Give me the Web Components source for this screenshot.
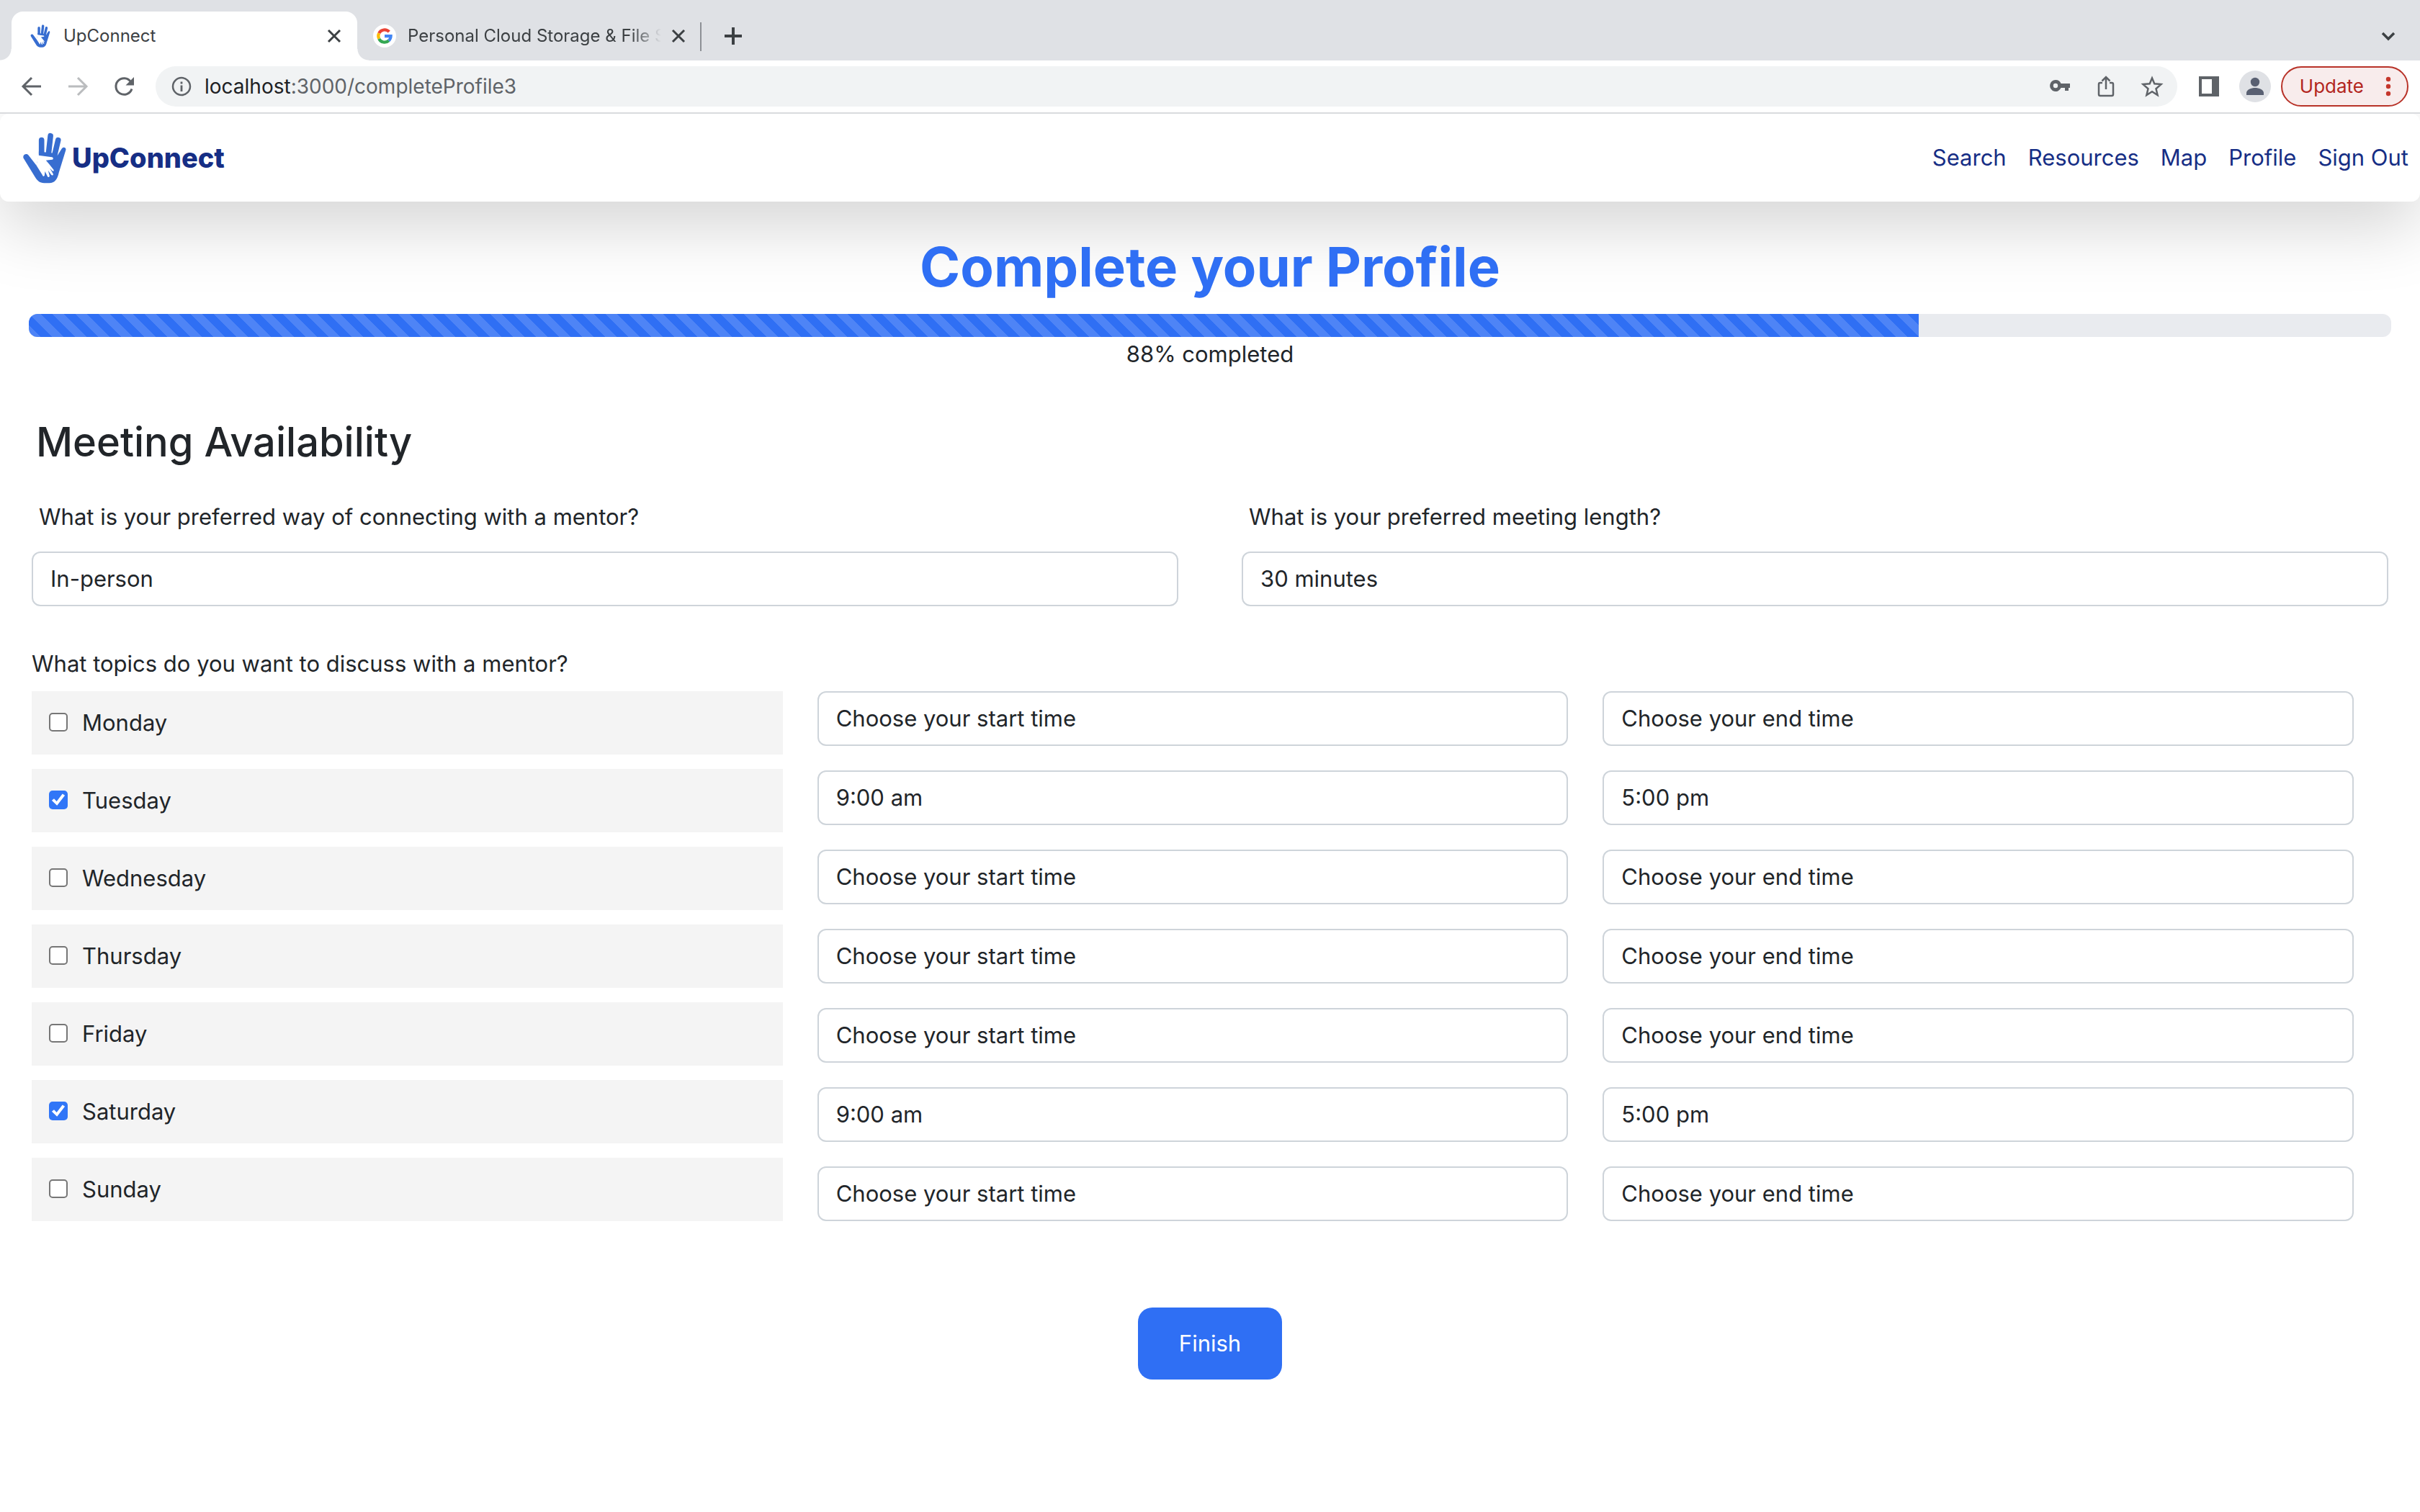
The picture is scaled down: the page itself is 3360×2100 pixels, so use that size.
<!DOCTYPE html>
<html lang="en">
<head>
<meta charset="utf-8">
<title>UpConnect</title>
<style>
  html, body { margin: 0; min-height: 100%; background: #fff; }
  body {
    font-family: Inter, "Noto Sans", sans-serif;
    font-size: 31px; line-height: 48px; color: #212529;
    --primary: #2f6ff4; --navy: #162e85; --edge: #ced4da;
  }
</style>
</head>
<body>
<browser-tabs></browser-tabs>
<browser-toolbar></browser-toolbar>
<app-page>
  <site-header slot="header"></site-header>
  <profile-progress value="80" text="88% completed">Complete your Profile</profile-progress>
  <availability-form></availability-form>
</app-page>

<script>
const define = (name, html, setup) => {
  const template = document.createElement('template');
  template.innerHTML = '<style>:host,*{box-sizing:border-box}button{font:inherit;color:inherit;background:none;border:0;padding:0;margin:0;display:block}svg{display:block}</style>' + html;
  customElements.define(name, class extends HTMLElement {
    constructor() {
      super();
      this.attachShadow({ mode: 'open' }).append(template.content.cloneNode(true));
    }
    connectedCallback() { if (setup) setup(this, this.shadowRoot); }
  });
};

define('hand-logo', `
<style>:host{display:block;flex:none} svg{width:100%;height:100%}</style>
<svg viewBox="96 70 181 214" aria-hidden="true">
  <g fill="none" stroke="#376dd0" stroke-width="23" stroke-linecap="round">
    <path d="M173.500 102V160M211 84L202 165M243 102L227 170"/>
  </g>
  <path fill="#376dd0" d="M98 178C92 163 110 155 118 164L152 208L162 166L162 150L238 158L239 168L258 138C264 128 278 132 275 144L246 238C240 266 228 282 206 282L184 282C166 282 156 272 147 258Z"/>
  <path fill="#fff" d="M152 208L160 166L217 173C224 174 224 183 217 184L192 187L205 202L224 226C227 231 222 234 218 230L208 219L222 243C224 249 218 251 214 247L201 229L207 251C208 258 200 259 198 253L188 233L186 250C183 256 178 253 177 248Z"/>
</svg>`);

define('browser-tabs', `
<style>
  :host{display:flex;align-items:flex-end;height:84px;padding:0 30px 0 16px;background:#dfe1e5;color:#3c4043;font-size:24px;line-height:32px}
  .tab{display:flex;align-items:center;height:68px}
  .active{position:relative;width:480px;padding:0 20px 0 26px;background:#fff;border-radius:16px 16px 0 0}
  .active::before,.active::after{content:"";position:absolute;bottom:0;width:16px;height:16px}
  .active::before{right:100%;background:radial-gradient(circle at 0 0,transparent 15px,#fff 16px)}
  .active::after{left:100%;background:radial-gradient(circle at 100% 0,transparent 15px,#fff 16px)}
  hand-logo{width:28px;height:32px;margin-right:18px}
  .title{flex:1;min-width:0;overflow:hidden;white-space:nowrap}
  .second{width:462px;padding:0 4px 0 22px}
  .g{width:32px;height:32px;margin-right:16px}
  .second .title{-webkit-mask-image:linear-gradient(to right,#000 310px,transparent 352px);mask-image:linear-gradient(to right,#000 310px,transparent 352px)}
  .rule{width:2px;height:40px;background:#8d9095;margin:0 32px 13px 14px}
  .plus,.more{height:68px;display:flex;align-items:center}
  .more{margin-left:auto}
</style>
<div class="tab active"><hand-logo></hand-logo><span class="title">UpConnect</span>
  <button aria-label="Close tab"><svg width="24" height="24"><path d="M4 4L20 20M20 4L4 20" stroke="#3c4043" stroke-width="3"/></svg></button></div>
<div class="tab second">
  <svg class="g" viewBox="0 0 32 32"><circle cx="16" cy="16" r="16" fill="#fff"/>
    <g fill="none" stroke-width="4.200"><path stroke="#ea4335" d="M8.200 12.200A8.600 8.600 0 0 1 22.300 10.200"/><path stroke="#fbbc05" d="M8.200 12.200A8.600 8.600 0 0 0 8.200 19.800"/><path stroke="#34a853" d="M8.200 19.800A8.600 8.600 0 0 0 21.800 22.400"/><path stroke="#4285f4" d="M21.800 22.400A8.600 8.600 0 0 0 24.600 16.200H16"/></g></svg>
  <span class="title">Personal Cloud Storage &amp; File S</span>
  <button aria-label="Close tab"><svg width="24" height="24"><path d="M4 4L20 20M20 4L4 20" stroke="#3c4043" stroke-width="3"/></svg></button></div>
<span class="rule"></span>
<button class="plus" aria-label="New tab"><svg width="24" height="24"><path d="M12 0V24M0 12H24" stroke="#3c4043" stroke-width="4"/></svg></button>
<button class="more" aria-label="Search tabs"><svg width="28" height="28"><path d="M6 10L14 18L22 10" fill="none" stroke="#3c4043" stroke-width="3.500"/></svg></button>`);

define('browser-toolbar', `
<style>
  :host{display:flex;align-items:center;height:74px;padding:0 16px 2px 28px;background:linear-gradient(#d9dbde,#d9dbde) bottom/100% 2px no-repeat #fff;color:#5f6368;font-size:28px;line-height:36px}
  .go{margin-right:32px}
  .go.reload{margin-right:28px}
  .omni{flex:1;display:flex;align-items:center;height:56px;margin-right:28px;padding:0 19px 0 22px;border-radius:28px;background:#f1f3f4}
  .url{flex:1;margin-left:18px} .url b{font-weight:400;color:#202124}
  .omni button{margin-left:32px}
  .panel{margin-right:26px}
  .avatar{margin-right:14px}
  .update{display:flex;align-items:center;gap:28px;height:56px;padding:0 20px 0 24px;border:2px solid #b83228;border-radius:28px;background:#f8ecec;color:#b3261e;font-size:26px}
</style>
<button class="go" aria-label="Back"><svg width="32" height="32" fill="none" stroke="#5f6368" stroke-width="3"><path d="M29 16H4.500M16 4L4 16L16 28"/></svg></button>
<button class="go" aria-label="Forward"><svg width="32" height="32" fill="none" stroke="#babcbe" stroke-width="3"><path d="M3 16H27.500M16 4L28 16L16 28"/></svg></button>
<button class="go reload" aria-label="Reload"><svg width="32" height="32"><path d="M25.500 9.500A11.300 11.300 0 1 0 27 19.500" fill="none" stroke="#5f6368" stroke-width="3"/><path d="M30 3V14.500H18.500Z" fill="#5f6368"/></svg></button>
<div class="omni">
  <svg width="28" height="28" fill="none" stroke="#5f6368"><circle cx="14" cy="14" r="12" stroke-width="2.500"/><path d="M14 12.500V21M14 7.500V10.500" stroke-width="2.800"/></svg>
  <span class="url"><b>localhost</b>:3000/completeProfile3</span>
  <button aria-label="Passwords"><svg width="32" height="32"><path fill="#5f6368" fill-rule="evenodd" d="M10 7A8 8 0 1 0 17.500 18H23V22H28V18H30V12H17.500A8 8 0 0 0 10 7ZM10 11.800A3.200 3.200 0 1 1 10 18.200A3.200 3.200 0 1 1 10 11.800Z"/></svg></button>
  <button aria-label="Share"><svg width="32" height="32" fill="none" stroke="#5f6368" stroke-width="2.500"><path d="M11 11H8Q6 11 6 13V27Q6 29 8 29H24Q26 29 26 27V13Q26 11 24 11H21M16 20V3.500M10.500 8.500L16 3L21.500 8.500"/></svg></button>
  <button aria-label="Bookmark"><svg width="32" height="32" fill="none" stroke="#5f6368" stroke-width="2.500"><path d="M16 4.500L19.300 12.300L28.500 13.100L21.500 19.200L23.600 28L16 23.300L8.400 28L10.500 19.200L3.500 13.100L12.700 12.300Z"/></svg></button>
</div>
<button class="panel" aria-label="Side panel"><svg width="32" height="28"><path fill="#5f6368" fill-rule="evenodd" d="M2 0H30V28H2ZM6 4V24H20V4Z"/></svg></button>
<button class="avatar" aria-label="Account"><svg width="44" height="44"><circle cx="22" cy="22" r="22" fill="#dfe1e5"/><circle cx="22" cy="16" r="6.200" fill="#596072"/><path fill="#596072" d="M10 34V31C10 26.500 17 24 22 24S34 26.500 34 31V34Z"/></svg></button>
<button class="update">Update<svg width="12" height="28" fill="#c5372c"><circle cx="6" cy="4" r="3.200"/><circle cx="6" cy="14" r="3.200"/><circle cx="6" cy="24" r="3.200"/></svg></button>`);

define('app-page', `
<style>:host{display:block;overflow:hidden;padding-bottom:32px} main{display:block;padding:0 40px}</style>
<slot name="header"></slot><main><slot></slot></main>`);

define('site-header', `
<style>
  :host{display:flex;align-items:center;justify-content:space-between;height:122px;padding:0 16px 0 32px;border-radius:12px;background:#fff;box-shadow:0 32px 96px rgba(0,0,0,.175);color:var(--navy)}
  a{color:inherit;text-decoration:none}
  .brand{display:flex;align-items:center;gap:8px;font-size:38px;font-weight:800}
  hand-logo{width:60px;height:71px}
  nav{display:flex;gap:30px}
</style>
<a class="brand" href="#"><hand-logo></hand-logo>UpConnect</a>
<nav><a href="#">Search</a><a href="#">Resources</a><a href="#">Map</a><a href="#">Profile</a><a href="#">Sign Out</a></nav>`);

define('profile-progress', `
<style>
  :host{display:block;position:relative;text-align:center}
  h1{margin:0;padding:42px 0 18px;font-size:76px;line-height:96px;font-weight:700;color:var(--primary)}
  .track{height:32px;border-radius:12px;overflow:hidden;background:#e9ebef}
  .fill{height:100%;background:linear-gradient(45deg,rgba(255,255,255,.15) 25%,transparent 25%,transparent 50%,rgba(255,255,255,.15) 50%,rgba(255,255,255,.15) 75%,transparent 75%) 0 0/32px 32px var(--primary)}
</style>
<h1><slot></slot></h1>
<div class="track" role="progressbar"><div class="fill"></div></div>
<div class="text"></div>`, (host, root) => {
  root.querySelector('.fill').style.width = host.getAttribute('value') + '%';
  root.querySelector('.text').textContent = host.getAttribute('text');
});

define('drop-down', `
<style>
  :host{display:block}
  label{display:block;padding:0 10px;margin-bottom:24px}
  label[hidden]{display:none}
  select{display:block;width:100%;height:76px;padding:0 24px;border:2px solid var(--edge);border-radius:12px;background:#fff;appearance:none;font:inherit;color:inherit}
</style>
<label for="field"></label><select id="field"><option></option></select>`, (host, root) => {
  const label = root.querySelector('label'), text = host.getAttribute('label');
  label.textContent = text || '';
  label.hidden = !text;
  if (!text) root.querySelector('select').setAttribute('aria-label', host.getAttribute('name'));
  root.querySelector('option').textContent = host.getAttribute('value');
});

define('day-check', `
<style>
  :host{display:block}
  label{display:flex;align-items:flex-start;height:88px;padding:20px 24px;background:#f4f4f4}
  input{appearance:none;flex:none;width:26px;height:26px;margin:10px 20px 0 0;border:2px solid #767676;border-radius:5px;background:#fff}
  input:checked{border:0;background:#3176f7}
  input:checked::before{content:"";display:block;width:26px;height:26px;background:#fff;clip-path:polygon(15% 53%,27% 43%,41% 58%,72% 17%,85% 26%,43% 80%)}
</style>
<label><input type="checkbox"><span><slot></slot></span></label>`, (host, root) => {
  root.querySelector('input').checked = host.hasAttribute('checked');
});

define('availability-form', `
<style>
  :host{display:block}
  h2{margin:0;padding:60px 10px 42px;font-size:56px;line-height:76px;font-weight:500}
  .pair{display:grid;grid-template-columns:1fr 1fr;gap:88px;padding:0 4px}
  .question{margin:0;padding:56px 4px 14px}
  .week{display:grid;grid-template-columns:repeat(3,1fr);gap:48px;padding:0 52px 0 4px}
  .days,.times{display:flex;flex-direction:column}
  .days{gap:20px} .times{gap:34px}
  .actions{display:flex;justify-content:center;padding-top:120px}
  .actions button{width:200px;height:100px;border-radius:20px;background:var(--primary);color:#fff}
</style>
<h2>Meeting Availability</h2>
<div class="pair">
  <drop-down label="What is your preferred way of connecting with a mentor?" value="In-person"></drop-down>
  <drop-down label="What is your preferred meeting length?" value="30 minutes"></drop-down>
</div>
<p class="question">What topics do you want to discuss with a mentor?</p>
<div class="week"><div class="days"></div><div class="times start"></div><div class="times end"></div></div>
<div class="actions"><button>Finish</button></div>`, (host, root) => {
  const days = ['Monday', 'Tuesday', 'Wednesday', 'Thursday', 'Friday', 'Saturday', 'Sunday'];
  const open = { Tuesday: ['9:00 am', '5:00 pm'], Saturday: ['9:00 am', '5:00 pm'] };
  const add = (parent, tag, attrs, text) => {
    const el = document.createElement(tag);
    for (const key in attrs) el.setAttribute(key, attrs[key]);
    if (text) el.textContent = text;
    root.querySelector(parent).append(el);
  };
  for (const day of days) {
    const [from, to] = open[day] || ['Choose your start time', 'Choose your end time'];
    add('.days', 'day-check', open[day] ? { checked: '' } : {}, day);
    add('.start', 'drop-down', { name: day + ' start', value: from });
    add('.end', 'drop-down', { name: day + ' end', value: to });
  }
});
</script>
</body>
</html>
